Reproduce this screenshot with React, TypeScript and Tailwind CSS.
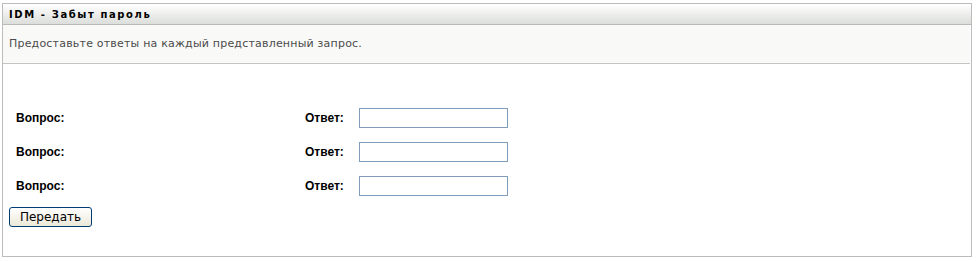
const questions = [1, 2, 3];

const App = () => {
  return (
    <div className="bg-white w-[976px] h-[261px] pl-[2px] pt-[3px] font-['Liberation_Sans',sans-serif]">
      <div className="w-[970px] h-[254px] border border-[#bcbcbc] flex flex-col">
        <div className="h-[21px] border-b border-[#b8bab6] bg-gradient-to-b from-white to-[#dcdedb] flex items-center px-[6px]">
          <span className="font-['DejaVu_Sans',sans-serif] font-bold text-[10px] tracking-[1.6px] text-black">
            IDM - Забыт пароль
          </span>
        </div>
        <div className="h-[39px] bg-[#f9f9f7] border-b border-[#c4c4c2] mr-[1px] flex items-center px-[6px]">
          <p className="font-['DejaVu_Sans',sans-serif] text-[11px] tracking-[0.2px] text-[#4b4b4b]">
            Предоставьте ответы на каждый представленный запрос.
          </p>
        </div>
        <form className="flex flex-col pt-[44px] px-[6px]" onSubmit={(e) => e.preventDefault()}>
          <div className="flex flex-col gap-[14px] pl-[7px]">
            {questions.map((q) => (
              <div key={q} className="flex items-center h-[20px]">
                <label className="w-[289px] font-bold text-[12px] text-black">Вопрос:</label>
                <label htmlFor={`answer-${q}`} className="w-[54px] font-bold text-[12px] text-black">
                  Ответ:
                </label>
                <input
                  id={`answer-${q}`}
                  type="text"
                  className="w-[149px] h-[20px] border border-[#7f9db9] bg-white"
                />
              </div>
            ))}
          </div>
          <div className="mt-[8px]">
            <button
              type="submit"
              className="w-[83px] h-[20px] rounded-[3px] border border-[#003c74] bg-gradient-to-b from-white to-[#ece9d8] text-[12px] text-black font-['DejaVu_Sans',sans-serif]"
            >
              Передать
            </button>
          </div>
        </form>
      </div>
    </div>
  );
};

export default App;
